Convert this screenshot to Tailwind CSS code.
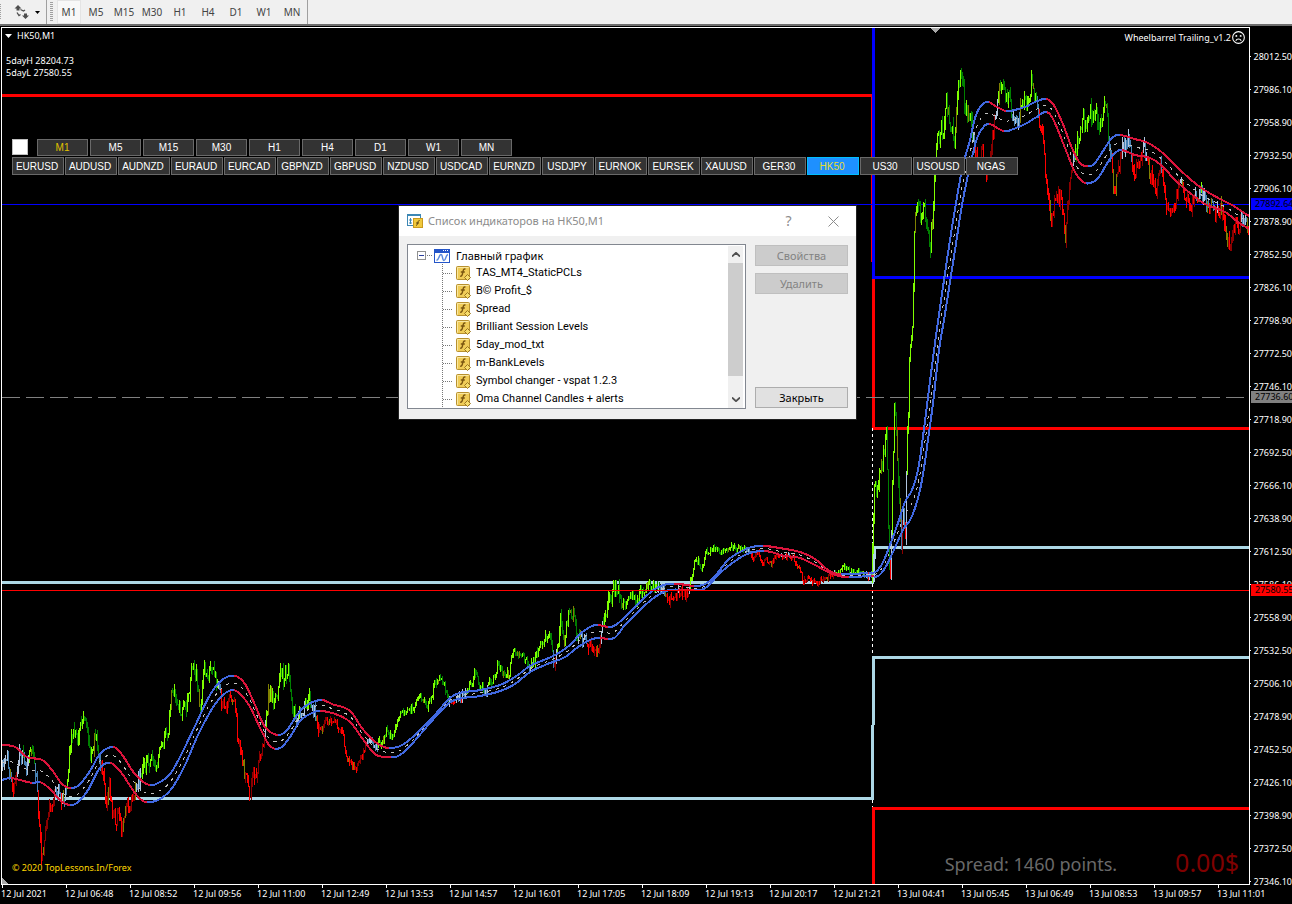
<!DOCTYPE html>
<html lang="ru">
<head>
<meta charset="utf-8">
<title>HK50,M1</title>
<script src="https://cdn.jsdelivr.net/npm/@tailwindcss/browser@4"></script>
</head>
<body class="flex h-screen flex-col overflow-hidden bg-black font-['Noto_Sans',sans-serif] text-[9px] leading-3 text-white">

<svg class="hidden">
  <symbol id="fx" viewBox="0 0 15 15">
    <rect x=".5" y=".5" width="13" height="13" rx="1" fill="#f0cc58" stroke="#b8912f"/>
    <path d="M1.500 12.500V1.500H12.500" fill="none" stroke="#fae8a0"/>
    <path d="M9.500 3.200C7.600 2.600 7.200 4 6.800 6.500S6.200 10.600 4.200 10.300M4.800 6h4" fill="none" stroke="#7a5510" stroke-width="1.400"/>
    <path d="M11.500 8.500l3 3-3 3-3-3z" fill="#f7dc6a" stroke="#9a7420"/>
  </symbol>
</svg>

<header class="flex h-6 shrink-0 items-stretch bg-[#f0f0f0] text-[10px] text-[#444]">
  <div class="flex w-[47px] items-center justify-between border-r border-[#a0a0a0] pr-1.5">
    <span class="h-4 w-px bg-[repeating-linear-gradient(#a0a0a0_0_1px,#f0f0f0_1px_2px)]"></span>
    <button aria-label="Объекты" class="flex items-center gap-[5px]">
      <svg class="h-4 w-4" viewBox="0 0 16 16" fill="#4d4d4d"><path d="M4 1l3.500 3.500H5.500V6.500h-3V4.500H.5zM11.500 15L8 11.500h2V9.500h3v2h2z"/><path d="M3 8.500l2 3 1.500-1M6.500 5.500l3 1.500 1.500-1" fill="none" stroke="#4d4d4d" stroke-width="1.300"/></svg>
      <svg class="h-[3px] w-[5px]" viewBox="0 0 5 3"><path d="M0 0h5L2.500 3z"/></svg>
    </button>
  </div>
  <div class="my-0.5 ml-[3px] mr-1 w-[3px] bg-[repeating-linear-gradient(#a0a0a0_0_1px,#f0f0f0_1px_2px)]"></div>
  <nav class="flex items-stretch border-r border-[#a0a0a0] pr-px">
    <button class="mr-px w-6 border border-[#e4e4e4] bg-[#f8f8f8]">M1</button>
    <button class="w-7">M5</button><button class="w-7">M15</button><button class="w-7">M30</button><button class="w-7">H1</button><button class="w-7">H4</button><button class="w-7">D1</button><button class="w-7">W1</button><button class="w-7">MN</button>
  </nav>
</header>
<div class="h-[3px] shrink-0 border-t-2 border-[#6d6d6d] bg-black"></div>

<main class="flex min-h-0 flex-1">
  <section class="relative ml-px min-w-0 flex-1 border border-white">
    <svg id="chart" class="absolute inset-0 h-full w-full" viewBox="2 28 1247 856" preserveAspectRatio="none" shape-rendering="crispEdges" fill="none">
      <path d="M2 95.500H872" stroke="#f00" stroke-width="3"/>
      <path d="M871.500 95V262" stroke="#f00"/>
      <path d="M873.500 28V277.500H1249" stroke="#00f" stroke-width="3"/>
      <path d="M873.500 279V428.500H1249" stroke="#f00" stroke-width="3"/>
      <path d="M872.500 428V808" stroke="#fff" stroke-dasharray="3 3"/>
      <path d="M2 582.500H873L874.500 547.500H1249M2 798.500H872.500L873.500 657.500H1249" stroke="#add8e6" stroke-width="3"/>
      <path d="M873.500 884V808.500H1249" stroke="#f00" stroke-width="3"/>
      <path d="M2 397.500H1249" stroke="#808080" stroke-dasharray="18 6"/>
      <path d="M2 204.500H1249" stroke="#00f"/>
      <g id="series"></g>
      <path d="M2 590.500H1249" stroke="#f00"/>
      <path d="M930 28h10l-5 5z" fill="#a9a9a9"/>
      <path d="M2 878l6 6H2z" fill="#a9a9a9"/>
    </svg>
    <div class="absolute left-[3px] top-0.5">
      <div class="flex items-center gap-[5px]"><svg class="h-1 w-[7px]" viewBox="0 0 7 4"><path d="M0 0h7L3.500 4z" fill="#fff"/></svg>HK50,M1</div>
      <p class="ml-px mt-[13px]">5dayH 28204.73</p>
      <p class="ml-px">5dayL 27580.55</p>
    </div>
    <div class="absolute right-1 top-[3px] flex items-center gap-px">Wheelbarrel Trailing_v1.2
      <svg class="h-[13px] w-[13px]" viewBox="0 0 12 12" fill="none" stroke="#fff"><circle cx="6" cy="6" r="5.400"/><path d="M3.500 9C4.500 6.800 7.500 6.800 8.500 9"/><circle cx="4" cy="4.500" r=".4"/><circle cx="8" cy="4.500" r=".4"/></svg>
    </div>
    <div class="absolute left-2.5 top-[111px] flex flex-col gap-px font-['Liberation_Sans',sans-serif] text-[10px]">
      <div id="frames" class="flex gap-[2px]">
        <input type="checkbox" aria-label="Панель" class="mr-[7px] h-4 w-4 appearance-none border border-[#c0c0c0] bg-white">
      </div>
      <div id="symbols" class="flex gap-px"></div>
    </div>
    <p class="absolute bottom-2.5 left-2.5 text-[#ffd700]">© 2020 TopLessons.In/Forex</p>
    <div class="absolute bottom-1.5 right-2.5 flex items-center gap-[58px]">
      <span class="text-lg text-[#696969]">Spread: 1460 points.</span>
      <span class="pb-1 text-[25px] text-[#800000]">0.00$</span>
    </div>
  </section>
  <aside id="prices" class="relative w-[42px] shrink-0 pt-[13px]">
    <div class="absolute left-px right-0 top-[171px] z-10 bg-[#00f] pl-1 text-black">27892.64</div>
    <div class="absolute left-px right-0 top-[364px] z-10 bg-[#808080] pl-1 text-black">27736.60</div>
    <div class="absolute left-px right-0 top-[557px] z-10 bg-[#f00] pl-1 text-black">27580.55</div>
  </aside>
</main>
<footer id="times" class="flex h-[19px] shrink-0 pl-px"></footer>

<div role="dialog" aria-labelledby="title" class="absolute left-[398px] top-[205px] flex w-[459px] flex-col border border-[#222] bg-[#f0f0f0] text-[11px] text-black">
  <div class="flex h-[30px] items-center bg-white pl-2 text-[#8c8c8c]">
    <svg class="h-4 w-4" viewBox="0 0 16 16"><rect x=".5" y="1.500" width="13" height="11" fill="#fff" stroke="#3c87b4"/><path d="M0 2h14" stroke="#3c87b4" stroke-width="2"/><path d="M3.500 5v6M2 7h3M2 10h3" stroke="#3c87b4"/><rect x="6.500" y="5.500" width="9" height="9" fill="#f0c83c" stroke="#c99a1e"/><path d="M12.500 7.500c-2-.5-1.500 5-3.500 5M9 10h3" fill="none" stroke="#5c4210"/></svg>
    <h2 id="title" class="ml-[5px] flex-1">Список индикаторов на HK50,M1</h2>
    <button class="w-[45px] text-sm">?</button>
    <button aria-label="Закрыть окно" class="flex w-[45px] justify-center"><svg class="h-[11px] w-[11px]" viewBox="0 0 11 11"><path d="M.5 .5l10 10M10.500 .5l-10 10" stroke="#8c8c8c"/></svg></button>
  </div>
  <div class="flex gap-[9px] px-2 pt-2 pb-2.5">
    <div class="flex h-[165px] flex-1 border border-[#828790] bg-white">
      <div class="flex-1 overflow-hidden">
        <div class="flex h-[19px] items-center pl-[9px] pt-0.5">
          <svg class="h-[9px] w-4" viewBox="0 0 16 9"><rect x=".5" y=".5" width="8" height="8" fill="#fff" stroke="#919191"/><path d="M2 4.500h5" stroke="#2b3f9e"/><path d="M10 4.500h6" stroke="#777" stroke-dasharray="1 1"/></svg>
          <svg class="ml-px h-[14px] w-4" viewBox="0 0 16 14"><rect x=".5" y=".5" width="15" height="13" fill="#fff" stroke="#2455c8"/><path d="M0 2h16" stroke="#2455c8" stroke-width="4"/><path d="M9 1.500h1M11 1.500h1M13 1.500h1" stroke="#fff"/><path d="M2.500 11.500C5 11 5 5.500 7 5.500S8 11.500 10 11.500S11.500 6 14 5.500" fill="none" stroke="#5b8ade" stroke-width="1.500"/></svg>
          <span class="ml-1.5">Главный график</span>
        </div>
        <ul id="indicators" class="font-[Roboto,sans-serif]"></ul>
      </div>
      <div class="mr-0.5 mt-px flex w-[15px] flex-col items-center bg-[#f0f0f0]">
        <button aria-label="Вверх" class="flex h-[17px] w-full items-center justify-center"><svg class="h-[5px] w-2" viewBox="0 0 8 5"><path d="M0 4.500L4 .8l4 3.700" fill="none" stroke="#505050" stroke-width="1.800"/></svg></button>
        <div class="h-[113px] w-full bg-[#cdcdcd]"></div>
        <div class="flex-1"></div>
        <button aria-label="Вниз" class="flex h-[17px] w-full items-center justify-center"><svg class="h-[5px] w-2" viewBox="0 0 8 5"><path d="M0 .5l4 3.700L8 .5" fill="none" stroke="#505050" stroke-width="1.800"/></svg></button>
      </div>
    </div>
    <div class="flex w-[93px] flex-col gap-[7px] pt-px">
      <button disabled class="h-[21px] border border-[#bfbfbf] bg-[#ccc] text-[#838383]">Свойства</button>
      <button disabled class="h-[21px] border border-[#bfbfbf] bg-[#ccc] text-[#838383]">Удалить</button>
      <button class="mt-auto mb-px h-[21px] border border-[#adadad] bg-[#e1e1e1]">Закрыть</button>
    </div>
  </div>
</div>

<script>
const add = (id, html) => document.getElementById(id).insertAdjacentHTML('beforeend', html);

add('frames', 'M1 M5 M15 M30 H1 H4 D1 W1 MN'.split(' ').map((t, i) =>
  `<button class="h-[17px] w-[51px] border border-[#696969] bg-[#333] pt-px ${i ? 'text-white' : 'text-[#e0c000]'}">${t}</button>`).join(''));
add('symbols', 'EURUSD AUDUSD AUDNZD EURAUD EURCAD GBPNZD GBPUSD NZDUSD USDCAD EURNZD USDJPY EURNOK EURSEK XAUUSD GER30 HK50 US30 USOUSD NGAS'.split(' ').map(t =>
  `<button class="h-[18px] w-[52px] border pr-0.5 pt-px ${t === 'HK50' ? 'border-[#00bfff] bg-[#1e90ff] text-[#e8dc30]' : 'border-[#696969] bg-[#333] text-white'}">${t}</button>`).join(''));
add('prices', '28012.50 27986.10 27958.90 27932.50 27906.10 27878.90 27852.50 27826.10 27798.90 27772.50 27746.10 27718.90 27692.50 27666.10 27638.90 27612.50 27586.10 27558.90 27532.50 27506.10 27478.90 27452.50 27426.10 27398.90 27372.50 27346.10'.split(' ').map(t =>
  `<div class="flex h-[33px] items-center gap-[3px]"><i class="h-px w-0.5 bg-white"></i>${t}</div>`).join(''));
add('times', ['12 Jul 2021', '12 Jul 06:48', '12 Jul 08:52', '12 Jul 09:56', '12 Jul 11:00', '12 Jul 12:49', '12 Jul 13:53', '12 Jul 14:57', '12 Jul 16:01', '12 Jul 17:05', '12 Jul 18:09', '12 Jul 19:13', '12 Jul 20:17', '12 Jul 21:21', '13 Jul 04:41', '13 Jul 05:45', '13 Jul 06:49', '13 Jul 08:53', '13 Jul 09:57', '13 Jul 11:01'].map(t =>
  `<div class="w-16 shrink-0 whitespace-nowrap"><i class="ml-px block h-[3px] w-px bg-white"></i>${t}</div>`).join(''));
add('indicators', ['TAS_MT4_StaticPCLs', 'B© Profit_$', 'Spread', 'Brilliant Session Levels', '5day_mod_txt', 'm-BankLevels', 'Symbol changer - vspat 1.2.3', 'Oma Channel Candles + alerts'].map(t =>
  `<li class="ml-[34px] flex h-[18px] items-center"><svg class="h-[18px] w-[11px]" viewBox="0 0 11 18"><path d="M.5 0v18M1 9.500h10" stroke="#777" stroke-dasharray="1 1"/></svg><svg class="ml-[3px] mr-[5px] h-[15px] w-[15px]"><use href="#fx"/></svg>${t}</li>`).join(''));

// Smooth curve through the knots, sampled once per bar.
function curve(k) {
  const out = [];
  for (let i = 0; i < k.length - 1; i++) {
    const [x0, y0] = k[i], [x1, y1] = k[i + 1];
    const p = k[i - 1] || k[i], n = k[i + 2] || k[i + 1];
    const m0 = (y1 - p[1]) / (x1 - p[0]) * (x1 - x0), m1 = (n[1] - y0) / (n[0] - x0) * (x1 - x0);
    for (let x = x0; x < x1; x++) {
      const t = (x - x0) / (x1 - x0), a = t * t, b = a * t;
      out[x] = (2 * b - 3 * a + 1) * y0 + (b - 2 * a + t) * m0 + (3 * a - 2 * b) * y1 + (b - a) * m1;
    }
  }
  const e = k[k.length - 1];
  out[e[0]] = e[1];
  return out;
}
const pts = s => s.split(' ').map(p => p.split(',').map(Number));
const upper = curve(pts('2,745 15,747 27,757 42,760 52,770 62,784 72,788 80,784 90,771 100,754 112,747 120,752 135,774 149,785 160,782 170,774 180,757 195,726 210,695 222,680 235,676 245,684 255,705 265,727 278,735 287,730 297,715 307,705 321,700 332,704 350,711 362,728 374,741 384,747 392,748 402,745 415,735 432,718 450,698 460,693 480,690 500,685 515,677 530,666 553,656 570,645 580,634 590,627 597,625 610,627 617,624 630,612 642,600 655,589 668,584 680,584 695,586 705,584 715,576 728,560 740,552 752,547 765,546 785,549 800,552 815,559 828,570 838,574 850,574 866,573 875,572 882,564 890,545 898,523 905,502 912,490 918,470 922,444 928,397 935,343 943,287 950,240 957,197 963,165 970,140 975,118 981,106 988,102 997,107 1007,111 1025,107 1035,102 1046,99 1053,104 1062,122 1072,148 1080,163 1087,166 1094,164 1103,151 1112,138 1119,135 1135,139 1150,144 1165,155 1180,170 1200,187 1220,199 1232,205 1249,216'));
const lower = curve(pts('2,780 10,778 20,780 33,783 40,782 50,789 60,800 70,805 78,802 88,790 100,768 110,763 120,771 135,793 143,801 150,802 160,799 172,788 185,765 198,735 212,709 222,696 232,690 240,694 250,707 262,732 270,746 280,748 290,737 300,721 312,713 320,711 335,714 350,722 362,738 375,754 387,757 398,756 410,746 430,723 448,704 458,699 480,696 500,691 515,684 530,672 545,665 565,657 578,647 590,640 598,638 614,638 625,625 640,610 655,597 670,590 700,590 708,586 720,573 738,559 750,553 765,551 785,556 800,558 815,565 830,573 845,577 870,576 878,576 885,568 893,552 903,530 910,520 916,505 922,480 928,440 934,395 939,350 944,320 950,282 955,250 962,205 968,175 975,145 980,132 988,124 1003,131 1008,131 1025,124 1035,118 1046,112 1053,119 1065,148 1075,172 1083,182 1090,183 1098,178 1108,162 1115,153 1121,150 1135,155 1150,158 1162,166 1175,180 1190,193 1205,204 1225,212 1238,222 1249,229'));
const price = pts('2,770 10,762 14,785 20,750 26,768 32,745 36,775 39,830 41,855 44,835 50,806 58,790 62,798 67,775 71,735 77,738 79,725 84,722 90,752 94,735 100,760 106,800 109,785 112,815 116,822 118,805 121,835 126,800 129,812 134,785 139,780 144,765 150,760 155,775 162,745 167,735 171,692 176,708 182,710 188,695 192,664 196,675 200,705 204,672 210,672 216,683 223,708 228,700 232,690 237,735 243,765 247,788 250,793 252,775 258,765 264,730 268,697 273,700 280,675 284,680 288,668 291,700 296,718 304,710 310,698 316,715 322,730 330,718 336,727 341,722 346,760 352,762 356,775 361,757 368,740 374,743 380,745 386,728 392,735 398,718 402,712 410,712 414,702 420,698 428,703 434,685 437,680 442,683 447,697 452,703 458,700 464,690 468,690 474,672 480,688 485,690 492,678 497,665 502,675 508,675 513,650 520,655 530,667 540,650 546,640 549,630 553,665 556,650 560,622 564,640 569,610 574,620 578,640 585,635 592,645 597,650 602,632 605,605 610,595 617,585 622,605 630,590 638,597 645,585 655,585 661,585 668,597 674,600 680,590 687,596 690,580 694,563 698,560 702,567 706,552 714,548 720,556 727,547 738,550 745,548 752,558 758,553 762,560 770,563 778,554 792,557 798,565 803,582 808,577 815,583 824,575 830,573 840,572 845,567 850,573 858,570 865,577 871,573 873,520 874,485 877,490 880,465 884,450 886,425 888,520 890,580 892,470 894,405 896,440 898,480 900,510 901,545 903,500 905,525 907,430 908,410 909,360 912,330 913,280 914,230 917,190 920,215 924,205 928,240 930,240 933,200 936,150 938,130 942,130 946,105 950,135 954,140 958,90 961,76 964,105 970,125 974,145 978,165 982,155 987,170 990,150 996,115 1000,82 1002,75 1006,95 1011,110 1016,128 1022,103 1028,92 1031,77 1036,95 1040,125 1045,170 1049,215 1051,222 1056,190 1061,200 1065,235 1069,195 1073,165 1078,135 1083,125 1088,110 1094,115 1100,120 1106,110 1110,155 1114,190 1118,165 1123,140 1128,140 1134,165 1142,145 1148,170 1154,185 1160,170 1165,210 1171,210 1176,190 1185,190 1190,210 1200,195 1208,208 1216,215 1222,210 1227,230 1230,255 1235,225 1240,215 1246,220 1248,240');

let seed = 11;
const rnd = () => (seed = seed * 16807 % 2147483647) / 2147483647;
const layers = {};
const draw = (color, d) => layers[color] = (layers[color] || '') + d;
const spread = x => x < 320 ? 18 : x < 545 ? 10 : x < 620 ? 16 : x < 690 ? 12 : x < 872 ? 7 : 20;
let k = 0, prev = price[0][1], drift = 0;
for (let x = 2; x < 1249; x++) {
  while (price[k + 1] && price[k + 1][0] <= x) k++;
  const [x0, y0] = price[k], [x1, y1] = price[k + 1] || [x0 + 1, y0];
  const a = spread(x);
  drift = drift * .4 + (rnd() - .5) * a;
  const y = y0 + (y1 - y0) * (x - x0) / (x1 - x0) + drift;
  const hi = Math.round(Math.min(prev, y) - rnd() * rnd() * a * .5), lo = Math.round(Math.max(prev, y) + rnd() * rnd() * a * .5) + 1;
  const rising = y < prev, at = (hi + lo) / 2;
  let c;
  if (rnd() < .05) c = '#808000';
  else if (at < upper[x]) c = rising ? '#7fff00' : '#008000';
  else if (at > lower[x]) c = rising ? '#8b0000' : '#f00';
  else c = rising ? '#b0c4de' : '#4682b4';
  draw(c, `M${x + .5} ${hi}V${lo}`);
  prev = y;
}
const bars = ['#808000', '#008000', '#8b0000', '#4682b4', '#b0c4de', '#f00', '#7fff00'].map(c => `<path d="${layers[c] || ''}" stroke="${c}"/>`).join('');
const bands = [upper, lower].map(b => {
  const seg = { '#dc143c': '', '#4169e1': '' };
  for (let x = 2; x < 1249; x++) seg[b[x + 1] > b[x] ? '#dc143c' : '#4169e1'] += `M${x} ${b[x].toFixed(1)}L${x + 1} ${b[x + 1].toFixed(1)}`;
  return Object.entries(seg).map(([c, d]) => `<path d="${d}" stroke="${c}" stroke-width="2" stroke-linecap="square"/>`).join('');
}).join('');
let mid = '';
for (let x = 2; x < 1249; x++) mid += (x === 2 ? 'M' : 'L') + x + ' ' + ((upper[x] + lower[x]) / 2).toFixed(1);
document.getElementById('series').innerHTML = bars + `<path d="${mid}" stroke="#c0c0c0" stroke-dasharray="3 5"/>` + bands;
</script>
</body>
</html>
